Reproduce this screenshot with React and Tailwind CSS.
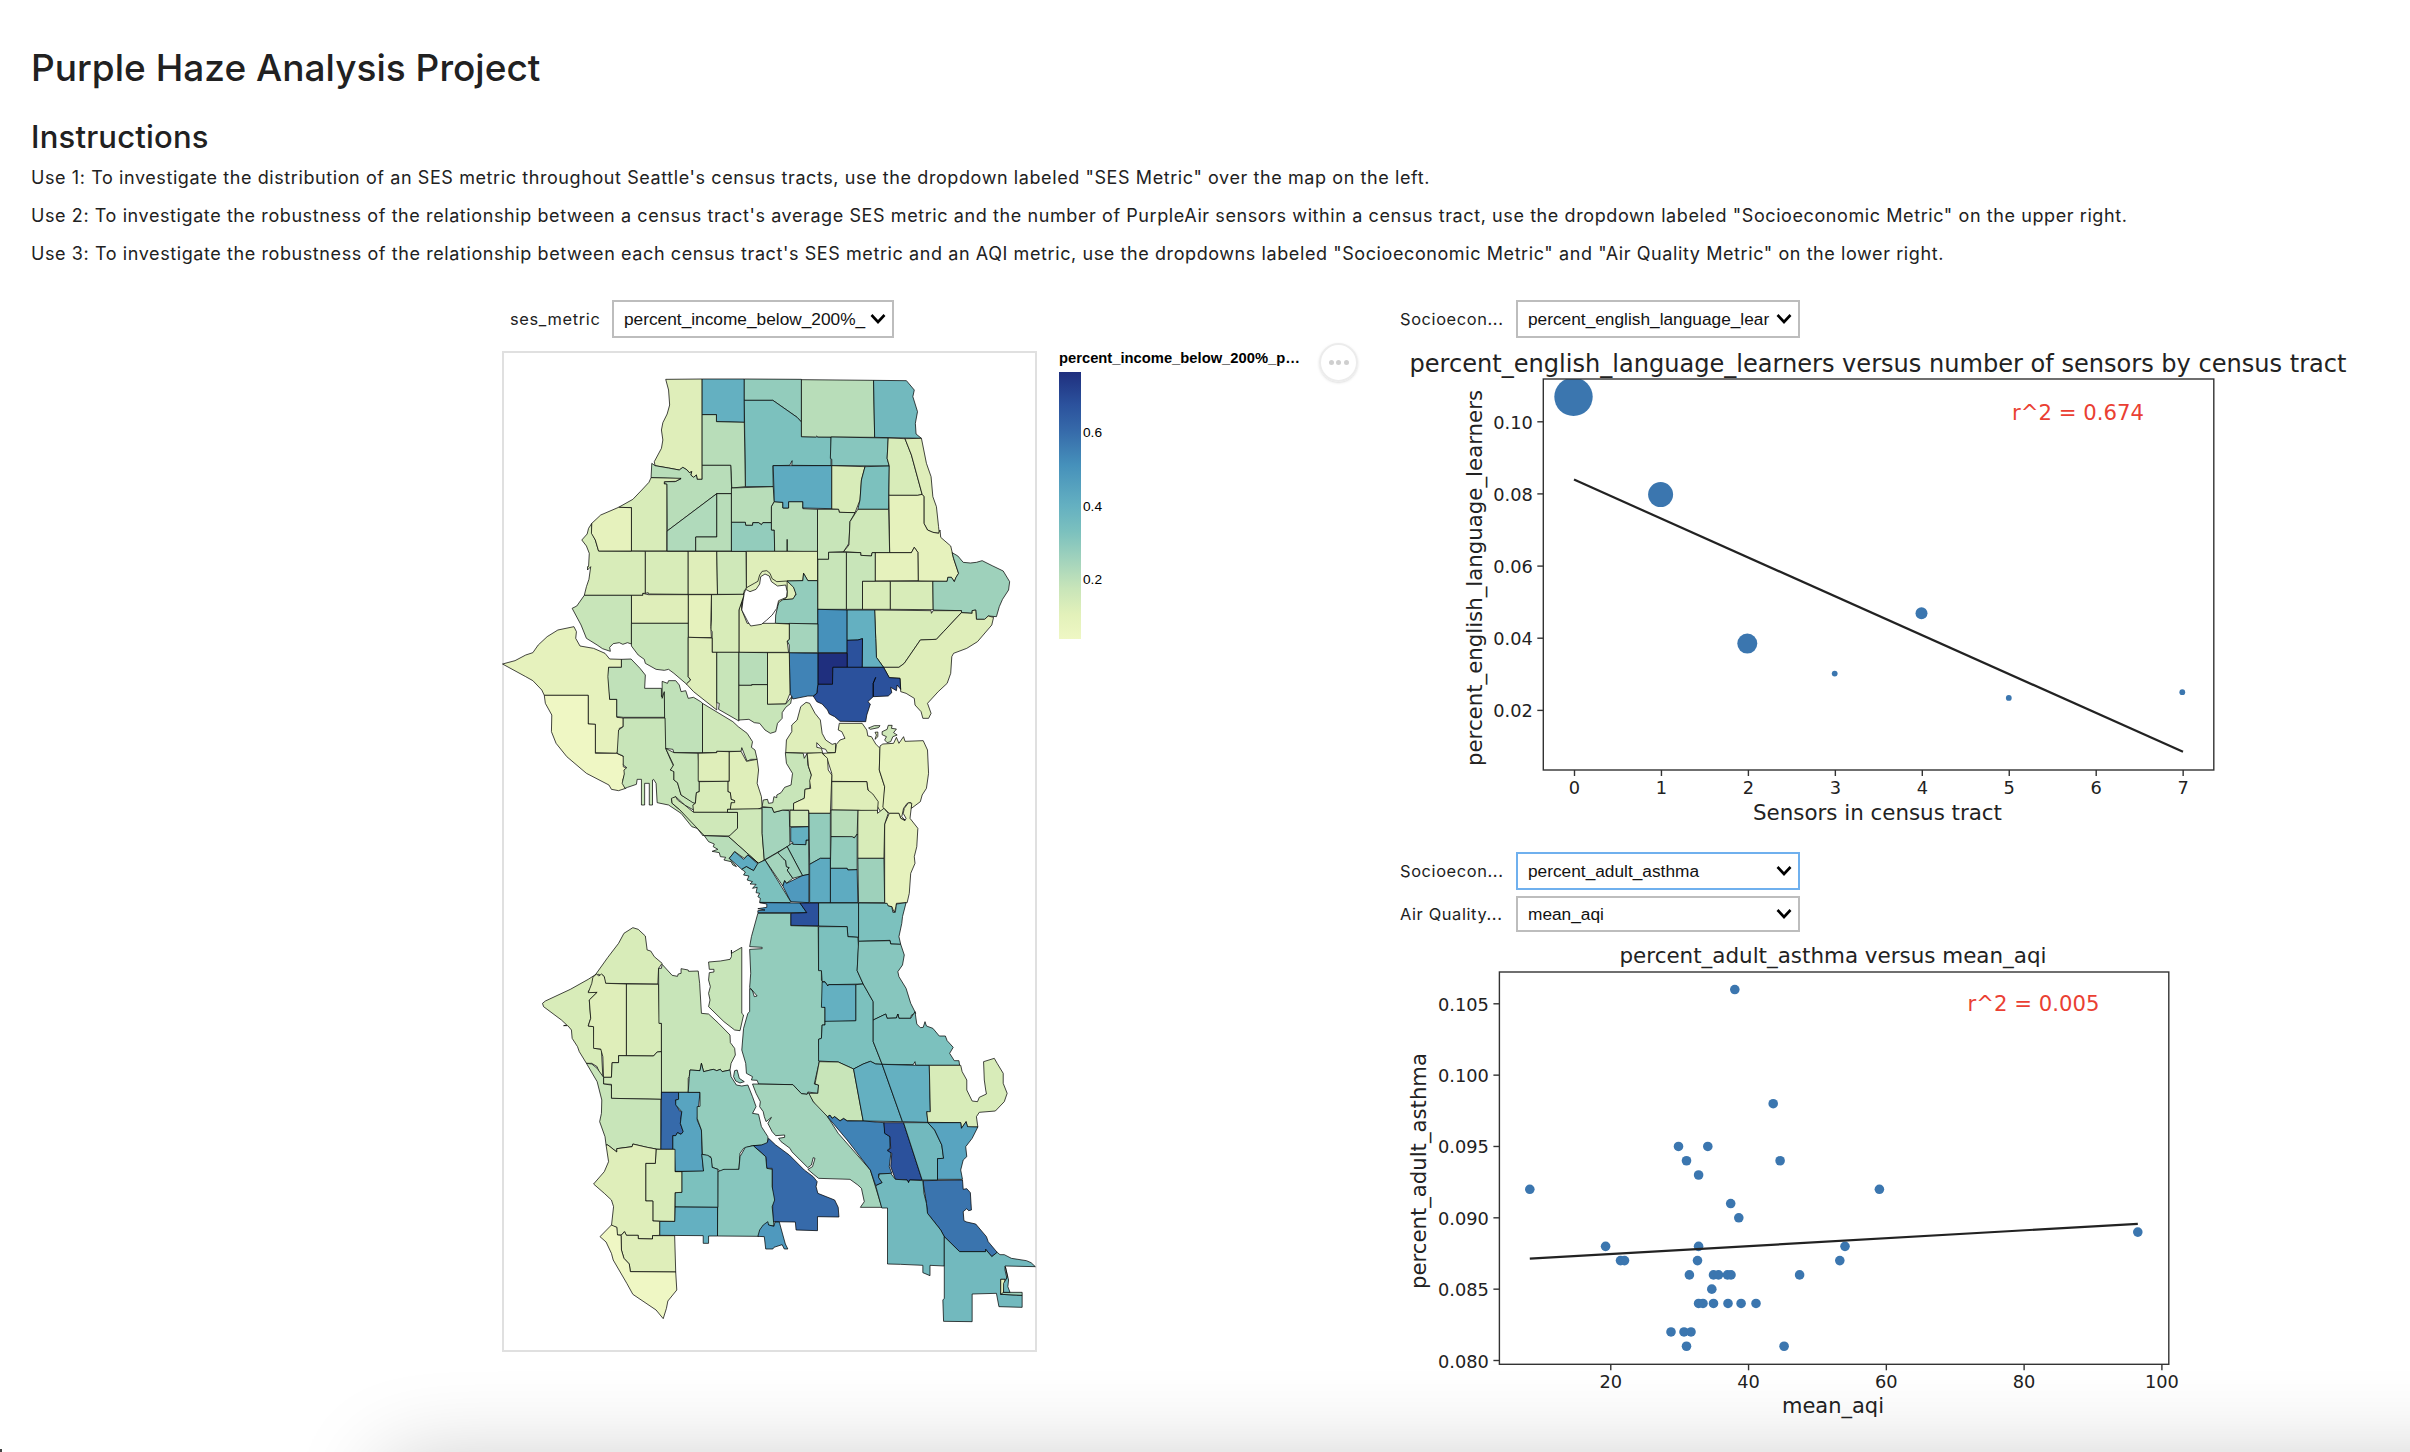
import React from "react";

const C = {
  y0: "#eff7c4", y1: "#e6f2bd", y2: "#dfeeba", y3: "#d8ecb9",
  g1: "#cfe8b9", g2: "#c8e5b9", g25: "#c0e1b9", g3: "#b8ddb9", g4: "#b0dabb",
  t1: "#a4d4bc", t15: "#9ed1bb", t2: "#93ccbc", t3: "#87c6be", t4: "#7cc1be", t5: "#72b9be",
  b1: "#64b0c1", b2: "#5eabc1", b3: "#58a4c0", b4: "#4f99be", b5: "#4691bb",
  b6: "#4083b6", b7: "#3a74ae", b8: "#366aaa", b9: "#2b519c", b10: "#1f2f7e",
};

/* Census tracts, grouped in five north-to-south bands: [shade, outline]. */
const BANDS = [
  {
    y: 340,
    tracts: [
      ["y2", "492,118 594,117 594,418 580,418 578,405 570,412 562,405 565,395 558,398 552,390 540,382 530,390 500,384 462,377 460,365 470,345 480,325 484,300 480,270 484,248 496,222 503,195 500,150"],
      ["b1", "594,117 712,117 712,247 634,245 634,224 594,224"],
      ["t2", "712,117 872,118 872,246 860,232 792,181 712,181"],
      ["t4", "712,181 792,181 860,232 872,246 872,290 955,291 955,377 845,376 846,362 839,376 792,377 793,440 715,440"],
      ["g3", "872,119 1074,121 1077,292 918,291 915,288 912,291 872,290"],
      ["t5", "1074,121 1166,122 1188,150 1184,170 1197,215 1191,250 1193,282 1208,295 1077,292"],
      ["g3", "594,224 634,224 634,245 712,247 715,440 677,444 674,376 594,376"],
      ["g3", "453,370 462,377 500,384 530,390 540,382 552,390 558,398 565,395 562,405 570,412 578,405 580,418 594,418 594,376 674,376 677,461 635,461 496,573 495,433 488,431 490,425 518,425 535,416 451,413"],
      ["y3", "451,413 535,415 520,424 488,425 488,432 495,432 495,633 396,633 396,503 360,502 400,478 425,450 445,427"],
      ["y3", "285,550 286,580 295,600 304,633 435,634 435,760 428,760 428,766 264,766 270,740 277,718 282,680 273,690 273,680 276,680 278,640 270,618 257,600 272,582 276,565"],
      ["y1", "285,550 310,525 360,502 396,503 396,633 304,633 295,600 284,580"],
      ["y3", "435,634 555,634 555,763 443,762 443,758 435,760"],
      ["y2", "555,634 635,634 637,763 555,763"],
      ["g1", "635,634 717,634 718,745 710,763 637,763"],
      ["g4", "496,573 635,461 635,591 576,591 576,633 496,633"],
      ["g3", "635,461 676,461 676,633 576,633 576,591 635,591"],
      ["g3", "676,444 793,440 796,485 788,500 788,548 764,548 760,554 752,548 736,548 735,556 716,556 715,547 676,547"],
      ["t2", "676,547 715,547 716,556 735,556 736,548 752,548 760,554 764,548 788,548 788,570 796,570 797,634 676,634"],
      ["g3", "796,485 820,487 820,504 836,504 836,485 876,485 876,506 917,508 917,635 832,634 832,598 832,634 797,634 796,570 788,570 788,500"],
      ["b2", "793,377 957,377 957,506 876,504 876,485 836,485 836,504 820,504 820,487 796,485"],
      ["t3", "955,291 1115,294 1112,355 1118,378 957,377 957,358 953,355"],
      ["y3", "957,377 1050,380 1040,420 1036,480 1022,518 978,517 976,508 957,507"],
      ["t4", "1050,380 1118,378 1116,508 1030,508 1036,480 1040,420"],
      ["y3", "1115,294 1162,296 1180,345 1210,463 1198,466 1117,466 1118,378 1112,355"],
      ["y2", "1162,296 1208,295 1222,370 1235,410 1240,470 1250,500 1256,560 1258,580 1240,577 1225,570 1215,550 1215,470 1210,463 1180,345"],
      ["y1", "1117,466 1198,466 1210,463 1215,470 1215,550 1225,570 1240,577 1256,580 1260,570 1262,592 1290,618 1298,655 1312,700 1305,712 1300,725 1292,712 1282,712 1280,724 1199,723 1198,637 1188,622 1180,638 1119,638"],
      ["g2", "917,508 976,508 978,517 1022,518 1008,545 1005,610 990,635 948,637 948,658 917,658"],
      ["g1", "1030,508 1116,508 1119,638 1070,638 1068,648 1038,646 1038,638 990,635 1005,615 1008,545"],
    ],
  },
  {
    y: 560,
    tracts: [
      ["y2", "718,-26 917,-26 917,62 890,62 878,40 876,62 832,63 850,80 857,100 850,117 815,120 705,150 710,103 718,85"],
      ["y2", "710,103 712,92 720,82 740,70 750,64 755,45 762,34 775,32 784,40 790,56 803,65 832,63 832,110 760,180 705,150"],
      ["t2", "832,63 876,62 878,40 890,62 917,62 918,192 799,190 800,165 808,128 820,119 848,117 857,103 850,82"],
      ["g2", "918,-2 948,-2 948,-23 998,-23 998,148 918,148"],
      ["g2", "998,-23 1038,-22 1038,-14 1068,-12 1070,-22 1079,-22 1079,64 1043,64 1043,148 998,148"],
      ["y1", "1079,-22 1180,-22 1188,-38 1198,-23 1199,62 1079,63"],
      ["y3", "1043,64 1121,64 1121,148 1043,148"],
      ["y3", "1121,64 1240,64 1241,149 1121,148"],
      ["t15", "1240,64 1280,64 1282,52 1292,52 1300,65 1305,52 1312,40 1298,-5 1294,-22 1310,-12 1325,7 1345,9 1362,7 1378,2 1408,18 1437,33 1455,65 1452,90 1435,118 1426,140 1418,170 1395,168 1385,178 1362,178 1360,150 1350,152 1350,160 1320,158 1320,152 1241,150"],
      ["y3", "1077,150 1235,152 1236,160 1241,152 1320,152 1320,158 1270,215 1250,238 1205,240 1160,310 1145,322 1102,322 1082,292 1080,235"],
      ["y2", "1320,158 1350,160 1350,152 1360,150 1362,178 1385,178 1395,168 1410,172 1405,195 1365,245 1335,265 1298,280 1293,290 1290,340 1280,370 1255,395 1225,430 1235,460 1228,475 1212,475 1207,455 1190,435 1188,415 1165,400 1150,395 1148,355 1118,353 1102,322 1145,322 1160,310 1205,240 1250,238 1270,215"],
      ["b5", "918,148 1000,150 1000,278 918,278"],
      ["b1", "1000,150 1077,150 1080,235 1082,292 1102,322 1042,322 1043,236 1030,240 1000,241"],
      ["b9", "1000,241 1030,240 1043,236 1042,322 1000,322"],
      ["b10", "918,280 1000,280 1000,322 960,322 959,373 918,373"],
      ["b9", "960,322 1102,322 1118,353 1148,355 1150,388 1140,375 1138,392 1122,382 1125,398 1115,408 1073,410 1073,370 1080,352 1073,370 1073,410 1058,425 1065,432 1055,465 1052,485 980,484 965,470 950,462 945,450 930,432 915,425 905,408 915,400 918,373 959,373"],
      ["b6", "838,278 918,280 918,373 915,400 905,408 890,408 848,417 840,400"],
      ["t1", "838,190 918,192 918,278 838,278 838,255 832,243 838,238"],
      ["y2", "705,150 720,190 799,190 838,192 838,238 832,243 836,277 697,277 697,150 704,125"],
      ["y3", "620,104 712,103 697,150 697,277 622,277 622,215 618,210 620,180"],
      ["y1", "555,104 620,104 618,200 620,233 555,232"],
      ["y2", "396,106 428,106 428,100 443,104 555,104 555,190 396,190"],
      ["g2", "264,106 396,106 396,252 385,248 372,253 362,248 345,251 335,262 337,274 315,266 300,255 270,235 255,195 240,165 230,145 243,138"],
      ["g2", "396,190 555,190 555,350 562,360 550,372 515,340 500,328 488,331 465,328 435,310 432,298 415,285 396,258"],
      ["y2", "555,232 622,234 622,277 635,277 635,450 570,395 550,372 562,360 555,350"],
      ["g2", "635,277 697,277 697,483 640,448 642,430 635,428"],
      ["g3", "697,277 777,278 777,374 733,374 733,376 697,376"],
      ["y2", "777,278 838,278 840,400 828,432 777,433"],
      ["g2", "697,376 733,376 733,374 777,374 777,433 828,432 845,410 842,430 828,442 818,458 818,475 805,490 800,515 785,520 770,510 755,490 740,488 725,478 697,480"],
      ["y1", "35,312 70,302 100,285 120,278 135,255 160,230 190,210 235,200 242,215 240,235 252,258 290,265 322,280 335,297 368,298 368,322 332,322 335,418 355,418 355,472 373,474 373,500 362,505 362,560 355,580 295,578 295,493 275,492 275,406 152,406 145,390 120,362 100,350"],
      ["y0", "152,406 275,406 275,492 295,493 295,580 355,580 375,590 373,620 383,625 378,640 372,660 380,685 360,692 340,688 333,675 270,640 215,590 185,550 172,515 173,465 155,430"],
      ["g25", "332,322 368,322 368,298 395,297 420,325 435,345 433,385 480,385 480,410 488,395 490,472 373,472 355,470 355,418 335,418 330,350"],
      ["g25", "482,364 497,370 500,362 520,362 530,375 535,395 548,392 555,415 570,412 590,425 595,430 595,578 515,578 512,568 490,565 488,395 482,415"],
      ["g1", "595,430 680,485 695,500 720,520 735,545 732,562 742,570 748,598 730,598 720,604 705,563 703,574 635,574 635,578 595,578"],
      ["y2", "885,427 895,430 910,460 925,480 930,520 940,540 958,553 968,550 967,578 945,578 940,568 930,565 915,548 915,562 928,565 932,580 828,578 830,540 845,515 845,495 860,480 870,440"],
      ["y1", "978,490 1042,490 1055,510 1058,528 1068,530 1080,552 1092,565 1090,630 1105,680 1103,735 1110,750 1095,757 1085,740 1060,700 1055,665 957,664 957,640 945,600 932,580 967,578 970,553 980,540 994,535 985,515 975,510"],
      ["g2", "1060,504 1076,497 1092,497 1088,503 1065,508"],
      ["g1", "1098,515 1112,508 1115,496 1126,496 1124,505 1138,507 1130,518 1140,525 1128,530 1122,545 1112,548 1105,540 1110,530 1098,524"],
      ["y1", "1078,517 1086,516 1086,530 1078,538 1082,525"],
    ],
  },
  {
    y: 750,
    tracts: [
      ["g2", "373,-96 490,-96 492,-5 505,28 514,48 505,60 515,62 515,90 525,98 535,135 575,160 570,180 545,165 520,140 508,148 510,160 530,178 600,250 597,258 580,235 565,230 535,190 500,165 468,158 465,100 458,88 455,90 455,165 446,165 446,100 433,100 433,165 424,165 424,88 412,88 410,103 385,112 378,115 370,100 376,72 375,60 383,53 373,45 373,18 356,10 360,-60 373,-70"],
      ["g2", "492,-5 515,8 583,10 586,95 586,125 578,128 575,160 568,158 535,135 525,98 515,90 515,65 505,60 514,45"],
      ["y2", "583,10 635,8 635,4 670,5 670,94 583,94"],
      ["y2", "670,5 703,4 718,34 748,28 752,60 748,100 760,140 762,172 750,178 668,178 673,172 675,158 685,152 675,148 673,128 666,125 666,94 670,94"],
      ["y3", "586,95 666,94 666,125 673,128 675,148 685,152 685,158 675,158 673,178 665,178 665,187 570,187 568,165 575,160 578,128 586,125"],
      ["g1", "570,187 693,187 693,235 672,258 600,257 530,178 510,160 508,145 520,140 525,150 545,165"],
      ["g1", "665,178 762,176 762,250 768,330 752,340 668,260 693,235 693,187 665,187"],
      ["g3", "600,257 668,260 752,340 722,315 712,325 685,305 670,325 690,350 680,345 675,335 655,330 660,322 645,320 642,308 622,304 638,298 625,290 628,282 612,275"],
      ["b2", "685,305 710,328 722,315 750,342 738,362 718,350 705,358 670,325"],
      ["t1", "762,172 790,173 795,187 820,180 838,182 840,285 768,330 762,250"],
      ["g2", "827,8 877,10 880,25 888,10 890,45 900,75 895,115 882,118 880,145 850,160 850,180 838,180 820,180 795,187 790,173 762,170 765,150 777,148 780,160 792,158 795,140 803,143 803,135 815,128 825,112 843,105 847,70 830,40"],
      ["y1", "888,10 928,8 935,15 945,25 947,60 957,75 953,190 893,190 892,181 850,181 850,160 880,145 882,118 898,115 895,92 900,75 892,50"],
      ["y2", "957,95 1055,95 1058,120 1072,132 1087,155 1085,185 1032,181 957,180"],
      ["y1", "1092,-12 1100,-18 1130,-20 1138,-38 1145,-20 1158,-40 1162,-26 1213,-28 1225,0 1228,70 1222,115 1210,135 1205,155 1180,175 1178,158 1168,160 1158,175 1153,200 1162,210 1150,205 1145,190 1118,190 1100,172 1105,110 1090,60"],
      ["y1", "1118,190 1145,190 1150,205 1162,212 1165,205 1157,190 1160,175 1172,158 1181,160 1176,205 1198,235 1195,290 1188,320 1190,340 1178,370 1174,430 1168,458 1138,460 1137,470 1132,487 1125,470 1115,468 1105,458 1105,222"],
      ["y3", "1030,181 1085,181 1085,190 1103,175 1115,190 1105,222 1103,325 1030,325"],
      ["t15", "1030,325 1103,325 1105,458 1032,458"],
      ["g3", "955,180 1030,181 1028,255 1020,262 955,260"],
      ["t2", "955,260 1014,260 1020,264 1028,252 1028,359 1002,360 1000,355 953,355"],
      ["b2", "953,355 1000,355 1002,360 1028,359 1030,458 953,458"],
      ["t2", "893,190 953,190 953,325 925,325 895,343"],
      ["b2", "895,343 925,325 953,325 953,458 895,458"],
      ["g1", "840,181 892,181 892,230 840,230"],
      ["t2", "832,290 845,280 884,284 885,270 892,270 893,373 875,377"],
      ["b1", "842,232 892,230 892,270 885,270 884,284 848,283 848,277 842,275"],
      ["t1", "770,330 810,305 820,325 828,332 830,350 838,353 832,360 848,385 830,400 825,392 820,408"],
      ["t15", "806,308 832,290 875,377 848,385 832,360 838,353 830,350 828,332 820,325"],
      ["b4", "825,392 830,400 875,377 893,373 893,458 842,455 820,408"],
      ["t4", "770,330 842,455 840,458 755,457 757,445 750,440 755,430 745,428 748,412 735,415 745,403 728,402 735,395 720,390 725,378 710,375 715,366 705,358 718,350 738,362 750,340"],
      ["b5", "755,458 868,459 887,488 750,488 750,482 770,480 750,476 775,472 775,462"],
      ["b9", "868,459 920,459 920,528 842,526 842,490 887,488"],
      ["t5", "920,459 1032,459 1032,562 1002,560 1000,530 920,528"],
      ["t4", "1032,459 1112,460 1115,468 1125,470 1128,487 1135,487 1138,462 1165,458 1155,500 1153,520 1145,560 1150,583 1122,582 1120,571 1032,574"],
    ],
  },
  {
    y: 900,
    tracts: [
      ["t2", "750,40 842,40 842,77 919,79 920,210 928,212 928,240 935,250 930,320 938,322 938,375 930,375 928,415 920,418 922,485 908,552 920,555 918,580 890,576 888,583 872,581 848,554 752,552 748,541 732,540 735,530 718,520 716,490 705,450 710,385 722,340 727,335 727,265 735,272 740,290 748,288 727,262 730,220 727,148 762,146 762,142 727,140 732,110"],
      ["t4", "920,80 1000,80 1002,110 1030,112 1032,140 1028,212 1045,252 948,254 946,258 938,245 930,245 928,212 920,212"],
      ["t4", "1024,254 1045,252 1073,305 1073,425 1098,493 1080,492 1065,484 1045,492 1018,507 975,486 920,483 920,418 928,415 930,375 938,375 938,362 1024,362"],
      ["b1", "930,246 938,246 946,258 948,254 1024,254 1024,362 938,364 938,322 928,322"],
      ["t3", "1032,124 1120,122 1122,132 1150,133 1160,165 1155,195 1142,215 1145,230 1165,265 1178,310 1192,340 1180,345 1178,355 1145,355 1142,342 1138,354 1112,355 1108,342 1073,360 1073,305 1045,252 1028,212"],
      ["t4", "1073,360 1108,342 1112,355 1138,354 1142,342 1145,355 1178,355 1190,335 1195,372 1205,383 1213,382 1218,365 1222,378 1240,385 1258,408 1275,408 1280,422 1297,442 1287,460 1300,482 1313,482 1315,496 1192,496 1190,485 1185,494 1098,493 1073,425"],
      ["g2", "922,485 975,486 1018,507 1045,663 1000,662 990,655 980,662 965,650 958,655 952,645 945,650 920,630 890,580 918,580 920,555 910,552"],
      ["b1", "1018,507 1045,492 1065,484 1080,492 1098,493 1155,665 1045,663"],
      ["b1", "1098,493 1192,496 1230,496 1233,642 1223,635 1226,667 1155,665"],
      ["y3", "1230,496 1318,496 1322,515 1335,540 1335,570 1350,603 1365,605 1370,592 1390,582 1388,570 1384,540 1382,485 1412,475 1420,490 1437,520 1437,550 1448,580 1440,605 1415,633 1370,637 1362,650 1366,681 1337,682 1333,665 1320,685 1318,668 1226,667 1223,635 1233,635"],
      ["y3", "400,83 415,88 435,108 440,150 450,153 460,170 482,190 472,205 470,252 322,250 320,230 315,225 310,230 305,222 292,232 298,220 330,172 360,130 375,100"],
      ["y3", "147,310 155,303 225,268 275,238 298,222 290,235 285,260 275,275 300,277 278,300 282,355 275,378 290,380 292,445 312,448 316,532 308,525 300,500 285,490 270,490 250,455 245,440 230,415 228,390 218,377 206,377 215,375 200,360 150,320"],
      ["y2", "298,222 305,228 312,222 320,230 324,250 382,252 382,467 360,467 360,488 342,488 340,532 318,532 316,470 310,447 290,445 290,380 275,378 282,355 278,300 300,277 275,278 285,250 288,232"],
      ["y3", "382,252 472,253 475,370 480,370 480,455 468,456 458,468 382,467"],
      ["g2", "472,205 480,205 482,193 510,226 525,229 527,222 535,220 535,206 555,210 556,214 583,213 587,250 592,340 612,342 640,370 672,405 673,428 685,445 687,465 675,490 672,510 650,515 645,508 635,512 625,508 598,515 592,490 588,512 560,510 558,530 555,535 555,577 480,577 480,370 473,370"],
      ["g2", "612,186 645,183 672,178 676,170 676,150 676,160 705,142 705,340 710,345 700,392 685,390 655,365 612,320 616,300 612,280 617,260 612,240 614,218 627,216 627,208 614,208"],
      ["g1", "318,532 340,532 342,488 360,488 360,467 458,468 468,456 480,455 480,598 340,595 340,553 318,552"],
      ["b8", "480,577 528,577 528,598 519,600 522,615 530,632 537,635 533,670 541,695 535,703 525,698 520,707 512,707 512,748 478,748"],
      ["b3", "528,577 588,577 580,660 592,690 594,770 598,814 518,814 516,748 512,748 512,707 520,707 525,698 535,703 541,695 533,670 537,635 520,615 520,600 528,598"],
      ["t2", "555,577 558,530 560,510 588,512 592,490 598,515 625,508 635,512 645,508 650,515 672,510 675,530 690,555 705,558 722,555 735,590 745,620 735,640 752,643 760,680 778,710 778,735 735,737 710,745 700,760 697,808 660,810 655,808 645,815 638,808 622,802 618,770 595,763 592,690 580,655 580,620 588,619 588,577"],
      ["t2", "685,512 692,510 698,535 712,545 700,549 688,543 682,530"],
      ["t1", "735,552 848,554 872,581 888,583 892,578 905,605 945,650 975,700 1065,810 1097,922 1037,922 1048,905 1040,865 1030,855 1008,838 920,835 905,822 890,808 903,800 910,775 905,773 900,795 890,803 845,755 840,745 815,725 808,715 825,712 825,705 800,707 790,695 778,670 788,652 773,665 768,650 765,635 755,620 757,605 745,580"],
    ],
  },
  {
    y: 1120,
    tracts: [
      ["g2", "478,-62 478,88 465,87 440,82 400,72 398,80 355,86 355,96 330,75 325,75 322,50 307,5 312,-20 313,-60 300,-115 270,-170 285,-168 300,-155 318,-128 318,-108 340,-105 340,-65"],
      ["b6", "945,-10 952,-14 958,-5 965,-10 980,3 990,-4 1000,3 1045,3 1103,8 1106,40 1120,50 1120,85 1113,90 1123,95 1118,140 1125,160 1088,162 1088,172 1098,188 1080,197 1065,150 1000,60"],
      ["b9", "1103,8 1158,8 1210,180 1175,180 1172,188 1168,180 1135,178 1122,140 1125,100 1113,92 1122,85 1120,50 1105,40"],
      ["t5", "1158,8 1226,8 1245,30 1265,75 1270,115 1253,116 1253,180 1210,180"],
      ["b3", "1226,8 1318,8 1320,25 1333,5 1337,20 1366,21 1350,55 1332,80 1335,110 1325,120 1318,150 1323,178 1253,178 1253,116 1270,115 1265,75 1245,30"],
      ["b7", "1212,182 1323,180 1325,208 1335,206 1345,218 1348,270 1340,272 1335,266 1325,275 1327,302 1335,306 1360,312 1390,350 1395,365 1420,397 1405,410 1388,388 1388,395 1315,395 1272,350 1262,330 1225,280 1222,250"],
      ["t5", "1090,162 1122,160 1135,178 1168,180 1172,188 1175,180 1212,182 1215,220 1222,250 1225,280 1262,330 1272,350 1272,438 1232,436 1232,467 1212,458 1212,436 1150,433 1113,432 1113,264 1097,264 1080,197 1098,188 1088,172"],
      ["t5", "1272,350 1315,395 1388,395 1388,388 1405,410 1420,397 1428,404 1440,404 1460,415 1502,422 1515,428 1527,440 1442,438 1442,450 1448,478 1430,478 1430,523 1490,526 1490,562 1425,560 1418,520 1350,522 1350,605 1270,604 1268,540 1272,535"],
      ["t15", "1430,517 1490,517 1490,526 1430,523"],
      ["y1", "1430,478 1442,478 1438,517 1430,523"],
      ["t5", "1443,440 1452,480 1450,500 1456,517 1438,517 1438,490 1445,478 1449,470"],
      ["b8", "737,77 760,75 776,68 780,55 800,75 838,105 880,150 905,170 916,185 913,200 918,220 965,240 975,262 977,291 917,290 917,332 857,330 855,306 792,305 790,145 775,145 772,110"],
      ["t3", "638,155 655,148 697,148 700,110 715,82 737,77 772,110 775,145 790,148 790,200 797,240 790,260 795,318 778,315 752,349 637,348"],
      ["t4", "518,155 598,153 593,103 610,106 620,115 622,142 638,148 638,262 518,261 518,218 537,217 537,155"],
      ["b1", "518,261 637,262 637,348 612,348 612,370 597,370 597,347 475,346 475,304 517,304"],
      ["b4", "778,305 780,315 795,319 798,306 810,306 820,345 827,372 834,387 824,387 818,374 795,382 792,387 772,387 768,350 750,349 755,330 765,315"],
      ["y3", "465,88 518,88 518,155 537,155 537,217 518,218 517,304 456,303 456,243 436,243 436,130 463,130"],
      ["y2", "325,75 330,75 355,96 355,86 398,80 400,72 440,82 465,87 463,130 436,130 436,243 456,243 456,303 475,304 475,346 455,347 455,357 415,356 415,346 382,346 376,335 368,345 355,345 355,322 340,318 346,260 340,240 320,220 290,192 320,155 332,125"],
      ["y2", "367,346 377,335 382,346 415,346 415,356 455,357 455,347 517,347 520,456 393,455 390,432 375,415 368,390"],
      ["y0", "340,315 355,322 357,345 367,346 368,390 375,415 390,432 393,455 520,456 523,510 498,543 494,565 485,596 465,570 400,523 383,490 345,420 340,400 325,366 308,350"],
    ],
  },
];

function TractMap() {
  return (
    <div className="h-[1001px] w-[535px] shrink-0 border-2 border-[#e0e0e0]">
      <svg viewBox="504 353 531 997" className="block h-full w-full overflow-visible">
        {BANDS.map((band) => (
          <g key={band.y} transform={`translate(490 ${band.y}) scale(${1 / 2.8} ${1 / 3})`}>
            {band.tracts.map(([shade, points], i) => (
              <polygon
                key={i}
                points={points}
                fill={C[shade]}
                stroke="#000"
                strokeOpacity="0.72"
                strokeWidth="1"
                strokeLinejoin="round"
                vectorEffect="non-scaling-stroke"
              />
            ))}
            {band.y === 560 && (
              <polygon
                points="708,125 712,100 716,88 728,95 745,88 755,72 758,50 770,42 782,48 788,65 805,78 828,75 832,95 830,112 808,122 803,145 790,165 775,180 760,193 730,198 722,185 705,150"
                fill="#fff"
                stroke="#000"
                strokeOpacity="0.72"
                strokeLinejoin="round"
                vectorEffect="non-scaling-stroke"
              />
            )}
          </g>
        ))}
      </svg>
    </div>
  );
}

function Select({ value, className }) {
  return (
    <div className={`flex items-center justify-between border-2 bg-white pr-[6px] pl-[10px] ${className}`}>
      <span className="pt-px font-['Liberation_Sans'] text-[17.3px] whitespace-nowrap text-[#111]">{value}</span>
      <svg viewBox="0 0 16 12" className="h-3 w-4 shrink-0" fill="none" stroke="#000" strokeWidth="2.6">
        <path d="M1.5 2 L8 9 L14.5 2" />
      </svg>
    </div>
  );
}

function Field({ label, value, className }) {
  return (
    <div className="flex items-center">
      <span className="w-[116px] font-['Inter'] text-[16.4px] tracking-[0.62px] whitespace-nowrap">{label}</span>
      <Select value={value} className={`w-[284px] ${className}`} />
    </div>
  );
}

const BLUE = "#3b76af";
const PLOT_FONT = "DejaVu Sans";

function Axes({ x, y, w, h, xTicks, yTicks }) {
  return (
    <g fontFamily={PLOT_FONT} fontSize="17.8" fill="#222">
      <rect x={x} y={y} width={w} height={h} fill="none" stroke="#333" strokeWidth="1.4" />
      {xTicks.map(([px, label]) => (
        <g key={label}>
          <path d={`M${px} ${y + h}v6`} stroke="#333" strokeWidth="1.4" />
          <text x={px} y={y + h + 24} textAnchor="middle">{label}</text>
        </g>
      ))}
      {yTicks.map(([py, label]) => (
        <g key={label}>
          <path d={`M${x} ${py}h-6`} stroke="#333" strokeWidth="1.4" />
          <text x={x - 10.5} y={py + 7} textAnchor="end">{label}</text>
        </g>
      ))}
    </g>
  );
}

const BUBBLES = [
  [1573.5, 396.8, 19.2], [1660.6, 494.6, 12.5], [1747.3, 643.6, 10], [1834.7, 673.6, 2.9],
  [1921.5, 613.2, 6], [2008.8, 697.9, 2.9], [2182.3, 692.2, 2.9],
];

function SensorsChart() {
  return (
    <svg viewBox="1400 338 960 514" className="block h-[514px] w-[960px]">
      <clipPath id="plotArea"><rect x="1543" y="379" width="671" height="391" /></clipPath>
      <g clipPath="url(#plotArea)" fill={BLUE}>
        {BUBBLES.map(([x, y, r]) => <circle key={x} cx={x} cy={y} r={r} />)}
      </g>
      <path d="M1574 479.6L2183 751.8" stroke="#222" strokeWidth="2.2" />
      <Axes
        x={1543.3} y={379} w={670.5} h={391}
        xTicks={[0, 1, 2, 3, 4, 5, 6, 7].map((n) => [1574.5 + n * 86.95, String(n)])}
        yTicks={[[421.8, "0.10"], [493.9, "0.08"], [566.1, "0.06"], [638.2, "0.04"], [710.4, "0.02"]]}
      />
      <g fontFamily={PLOT_FONT} fontSize="21.5" fill="#222">
        <text x="1409.5" y="371.5" fontSize="24" textLength="937" lengthAdjust="spacingAndGlyphs">percent_english_language_learners versus number of sensors by census tract</text>
        <text x="1753" y="819.5" textLength="249" lengthAdjust="spacingAndGlyphs">Sensors in census tract</text>
        <text transform="translate(1482 766) rotate(-90)" textLength="376" lengthAdjust="spacingAndGlyphs">percent_english_language_learners</text>
        <text x="2012" y="420" textLength="132" lengthAdjust="spacingAndGlyphs" fill="#ea3f33">r^2 = 0.674</text>
      </g>
    </svg>
  );
}

const SAMPLES = [
  [1734.8, 0.106], [1773.2, 0.098], [1678.5, 0.095], [1707.8, 0.095], [1686.5, 0.094], [1780.1, 0.094],
  [1698.6, 0.093], [1529.8, 0.092], [1879.4, 0.092], [1730.7, 0.091], [1738.8, 0.09], [2137.8, 0.089],
  [1605.6, 0.088], [1698.6, 0.088], [1845, 0.088], [1620.5, 0.087], [1624.5, 0.087], [1697.5, 0.087],
  [1839.8, 0.087], [1689.4, 0.086], [1713.5, 0.086], [1718.5, 0.086], [1727.5, 0.086], [1731, 0.086],
  [1799.6, 0.086], [1711.8, 0.085], [1698.6, 0.084], [1703, 0.084], [1713.5, 0.084], [1728, 0.084],
  [1741.1, 0.084], [1756, 0.084], [1671, 0.082], [1684, 0.082], [1691, 0.082], [1686.5, 0.081], [1784.1, 0.081],
];

function AqiChart() {
  return (
    <svg viewBox="1400 932 960 520" className="block h-[520px] w-[960px]">
      <g fill={BLUE}>
        {SAMPLES.map(([x, v], i) => <circle key={i} cx={x} cy={1360.5 - (v - 0.08) * 14268} r="4.8" />)}
      </g>
      <path d="M1529.8 1258.7L2137.8 1223.8" stroke="#222" strokeWidth="2.2" />
      <Axes
        x={1499.4} y={972} w={669.4} h={392.3}
        xTicks={[20, 40, 60, 80, 100].map((n) => [1473 + n * 6.889, String(n)])}
        yTicks={["0.105", "0.100", "0.095", "0.090", "0.085", "0.080"].map((s, i) => [1003.8 + i * 71.34, s])}
      />
      <g fontFamily={PLOT_FONT} fontSize="21.5" fill="#222">
        <text x="1619.5" y="963" textLength="427" lengthAdjust="spacingAndGlyphs">percent_adult_asthma versus mean_aqi</text>
        <text x="1782" y="1412.5" textLength="102" lengthAdjust="spacingAndGlyphs">mean_aqi</text>
        <text transform="translate(1425.5 1289) rotate(-90)" textLength="236" lengthAdjust="spacingAndGlyphs">percent_adult_asthma</text>
        <text x="1967.5" y="1011" textLength="132" lengthAdjust="spacingAndGlyphs" fill="#ea3f33">r^2 = 0.005</text>
      </g>
    </svg>
  );
}

function Legend() {
  return (
    <div className="-mt-[3px] ml-[22px] w-[260px] font-['Liberation_Sans']">
      <div className="text-[14.75px] leading-[20px] font-bold whitespace-nowrap text-black">percent_income_below_200%_p…</div>
      <div className="mt-[4px] flex">
        <div className="h-[267px] w-[22px] bg-[linear-gradient(#1f2f7e,#2b519c_12%,#366aaa_22%,#4691bb_35%,#64b0c1_50%,#7cc1be_60%,#a4d4bc_71%,#c8e5b9_81%,#e3f1ba_91%,#eff7c4)]" />
        <div className="ml-0.5 flex flex-col gap-[53.5px] pt-[51px] text-[13.7px] leading-5 text-black">
          <span>0.6</span>
          <span>0.4</span>
          <span>0.2</span>
        </div>
      </div>
    </div>
  );
}

export default function App() {
  return (
    <div className="relative h-[1452px] w-[2410px] overflow-hidden bg-white text-[#212121]">
      <div className="pointer-events-none absolute top-[1462px] left-[385px] h-40 w-[2200px] rounded-xl shadow-[0_0_90px_rgba(0,0,0,0.22)]" />
      <div className="absolute bottom-0 left-0 h-[3px] w-[2px] bg-[#444]" />

      <header className="flex h-[300px] flex-col pt-[44px] pl-[31px] font-['Inter'] whitespace-nowrap">
        <h1 className="text-[37px] leading-[48px] font-medium tracking-[0.02px]">Purple Haze Analysis Project</h1>
        <h2 className="mt-[26px] text-[31px] leading-[38px] font-medium tracking-[0.2px]">Instructions</h2>
        <div className="mt-[3px] text-[18px] leading-[38px] tracking-[0.59px]">
          <p>Use 1: To investigate the distribution of an SES metric throughout Seattle's census tracts, use the dropdown labeled "SES Metric" over the map on the left.</p>
          <p>Use 2: To investigate the robustness of the relationship between a census tract's average SES metric and the number of PurpleAir sensors within a census tract, use the dropdown labeled "Socioeconomic Metric" on the upper right.</p>
          <p>Use 3: To investigate the robustness of the relationship between each census tract's SES metric and an AQI metric, use the dropdowns labeled "Socioeconomic Metric" and "Air Quality Metric" on the lower right.</p>
        </div>
      </header>

      <main className="flex pl-[502px]">
        <section className="w-[898px] shrink-0">
          <div className="flex items-center pl-2">
            <span className="w-[102px] font-['Inter'] text-[16.4px] tracking-[0.65px]">ses_metric</span>
            <Select value="percent_income_below_200%_" className="h-[38px] w-[282px] border-[#bdbdbd]" />
          </div>
          <div className="mt-[13px] flex items-start">
            <TractMap />
            <Legend />
            <div className="-mt-[8px] flex h-[39px] w-[39px] items-center justify-center gap-[2.5px] rounded-full border-2 border-[#ececec] shadow-sm">
              <i className="h-[5px] w-[5px] rounded-full bg-[#cfcfcf]" />
              <i className="h-[5px] w-[5px] rounded-full bg-[#cfcfcf]" />
              <i className="h-[5px] w-[5px] rounded-full bg-[#cfcfcf]" />
            </div>
          </div>
        </section>
        <section className="flex w-[980px] flex-col">
          <Field label="Socioecon..." value="percent_english_language_lear" className="h-[38px] border-[#bdbdbd]" />
          <SensorsChart />
          <div className="flex flex-col gap-[6px]">
            <Field label="Socioecon..." value="percent_adult_asthma" className="h-[38px] border-[#6fb0ee]" />
            <Field label="Air Quality..." value="mean_aqi" className="h-[36px] border-[#bdbdbd]" />
          </div>
          <AqiChart />
        </section>
      </main>
    </div>
  );
}
